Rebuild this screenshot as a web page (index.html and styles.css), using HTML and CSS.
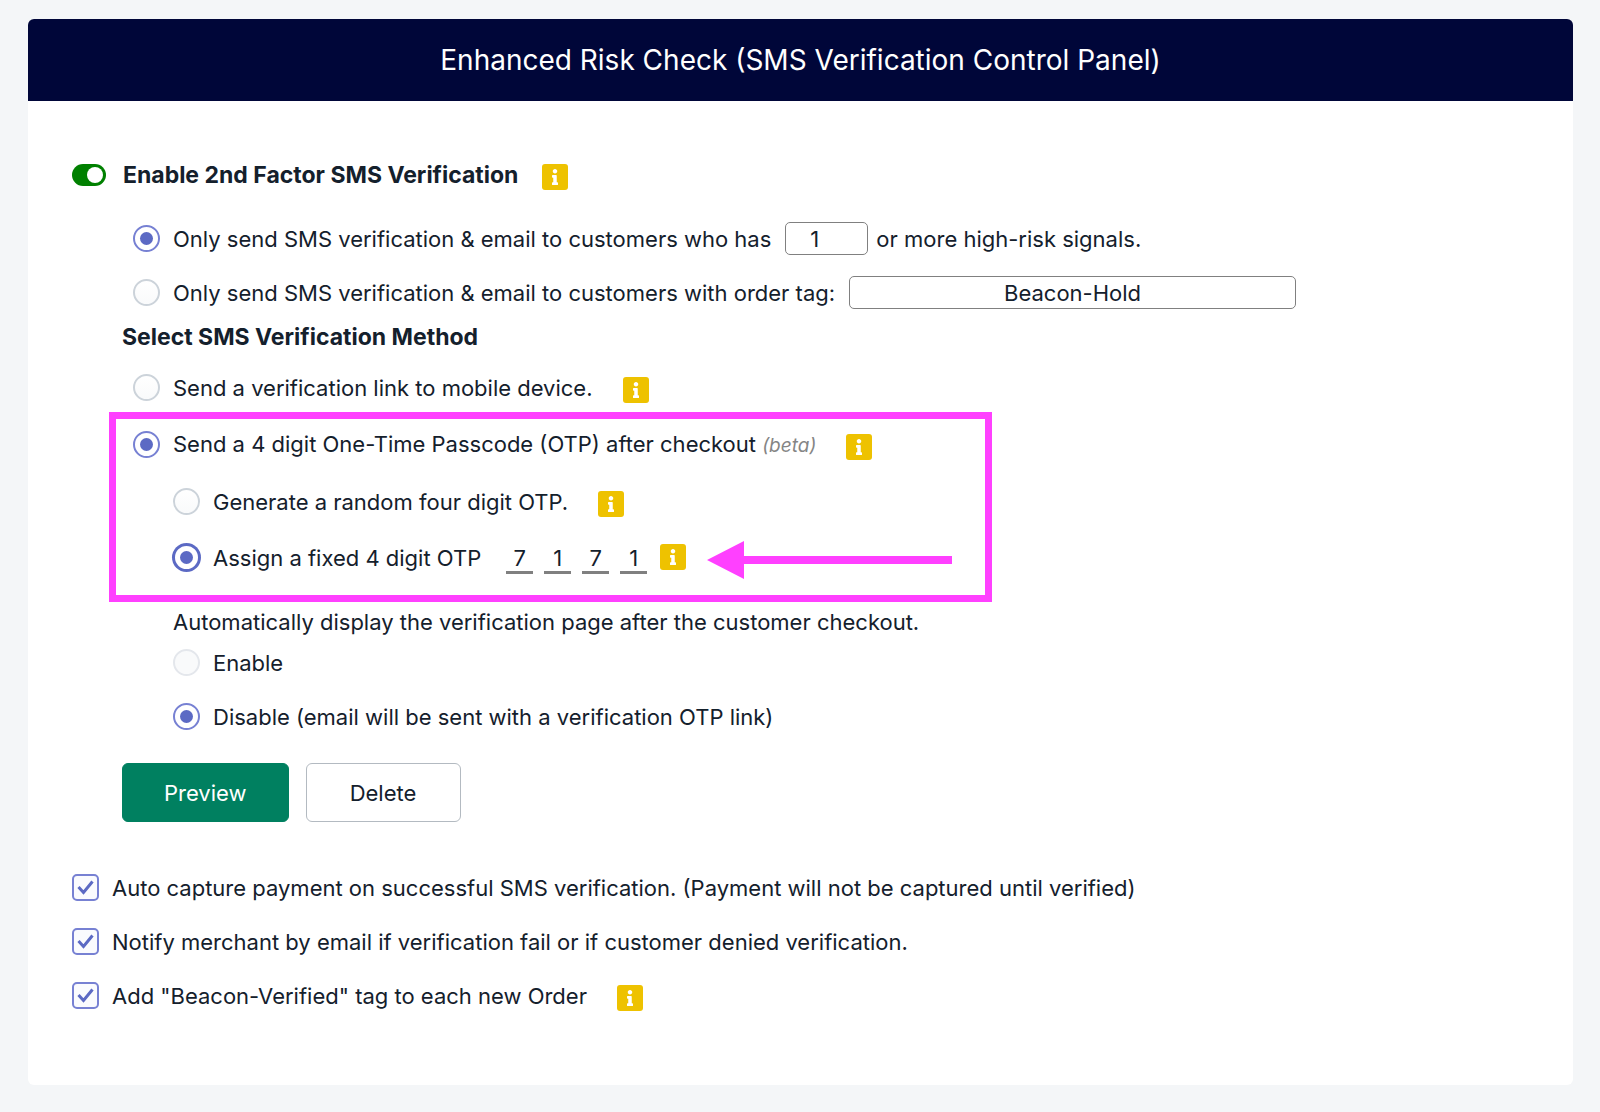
FILE: index.html
```html
<!DOCTYPE html>
<html lang="en">
<head>
<meta charset="utf-8">
<meta name="viewport" content="width=device-width, initial-scale=1">
<title>Enhanced Risk Check</title>
<link rel="stylesheet" href="styles.css">
</head>
<body>
<svg width="0" height="0" class="sprite" aria-hidden="true">
  <symbol id="info" viewBox="0 0 192 512"><path d="M20 424.229h20V279.771H20c-11.046 0-20-8.954-20-20V212c0-11.046 8.954-20 20-20h112c11.046 0 20 8.954 20 20v212.229h20c11.046 0 20 8.954 20 20V492c0 11.046-8.954 20-20 20H20c-11.046 0-20-8.954-20-20v-47.771c0-11.046 8.954-20 20-20zM96 0C56.235 0 24 32.235 24 72s32.235 72 72 72 72-32.235 72-72S135.764 0 96 0z"/></symbol>
</svg>
<main class="card">
  <header class="card-header"><h1>Enhanced Risk Check (SMS Verification Control Panel)</h1></header>
  <form class="card-body">
    <div class="row">
      <input class="toggle" type="checkbox" role="switch" id="enable-sms" checked>
      <label class="strong" for="enable-sms">Enable 2nd Factor SMS Verification</label>
      <button type="button" class="info info-title" aria-label="About SMS verification"><svg><use href="#info"/></svg></button>
    </div>

    <div class="settings">
      <div class="row option">
        <input class="radio" type="radio" name="audience" id="by-signals" checked>
        <label for="by-signals">Only send SMS verification &amp; email to customers who has</label>
        <input class="field count" type="text" inputmode="numeric" value="1" aria-label="Number of high-risk signals">
        <span>or more high-risk signals.</span>
      </div>
      <div class="row option">
        <input class="radio" type="radio" name="audience" id="by-tag">
        <label for="by-tag">Only send SMS verification &amp; email to customers with order tag:</label>
        <input class="field tag" type="text" value="Beacon-Hold" aria-label="Order tag">
      </div>

      <h2 class="strong">Select SMS Verification Method</h2>
      <div class="row option link-option">
        <input class="radio" type="radio" name="method" id="by-link">
        <label for="by-link">Send a verification link to mobile device.</label>
        <button type="button" class="info" aria-label="About verification links"><svg><use href="#info"/></svg></button>
      </div>

      <div class="highlight">
        <div class="row option otp-option">
          <input class="radio" type="radio" name="method" id="by-otp" checked>
          <label for="by-otp">Send a 4 digit One-Time Passcode (OTP) after checkout <em>(beta)</em></label>
          <button type="button" class="info" aria-label="About one-time passcodes"><svg><use href="#info"/></svg></button>
        </div>
        <div class="row option nested">
          <input class="radio" type="radio" name="otp" id="otp-random">
          <label for="otp-random">Generate a random four digit OTP.</label>
          <button type="button" class="info" aria-label="About random passcodes"><svg><use href="#info"/></svg></button>
        </div>
        <div class="row option nested">
          <input class="radio focused" type="radio" name="otp" id="otp-fixed" checked>
          <label for="otp-fixed">Assign a fixed 4 digit OTP</label>
          <div class="digits">
            <input type="text" maxlength="1" value="7" aria-label="Digit 1">
            <input type="text" maxlength="1" value="1" aria-label="Digit 2">
            <input type="text" maxlength="1" value="7" aria-label="Digit 3">
            <input type="text" maxlength="1" value="1" aria-label="Digit 4">
          </div>
          <button type="button" class="info info-digits" aria-label="About fixed passcodes"><svg><use href="#info"/></svg></button>
          <svg class="arrow" viewBox="0 0 245 38" aria-hidden="true"><path d="M0 19 37 0v15h208v8H37v15z"/></svg>
        </div>
      </div>

      <p class="note">Automatically display the verification page after the customer checkout.</p>
      <div class="row option nested">
        <input class="radio" type="radio" name="auto" id="auto-on" disabled>
        <label for="auto-on">Enable</label>
      </div>
      <div class="row option nested">
        <input class="radio" type="radio" name="auto" id="auto-off" checked>
        <label for="auto-off">Disable (email will be sent with a verification OTP link)</label>
      </div>

      <div class="actions">
        <button type="button" class="btn primary">Preview</button>
        <button type="button" class="btn">Delete</button>
      </div>
    </div>

    <div class="row">
      <input class="check" type="checkbox" id="capture" checked>
      <label for="capture">Auto capture payment on successful SMS verification. (Payment will not be captured until verified)</label>
    </div>
    <div class="row">
      <input class="check" type="checkbox" id="notify" checked>
      <label for="notify">Notify merchant by email if verification fail or if customer denied verification.</label>
    </div>
    <div class="row">
      <input class="check" type="checkbox" id="add-tag" checked>
      <label for="add-tag">Add "Beacon-Verified" tag to each new Order</label>
      <button type="button" class="info" aria-label="About the order tag"><svg><use href="#info"/></svg></button>
    </div>
  </form>
</main>
</body>
</html>
```
FILE: styles.css
```css
* { box-sizing: border-box; }

body {
  margin: 0;
  padding: 19px 27px 27px 28px;
  background: #f4f6f8;
  color: #14202c;
  font: 22px/28px Inter, "Liberation Sans", sans-serif;
}

input, button { font: inherit; color: inherit; margin: 0; }
label, span { white-space: nowrap; }
.sprite { position: absolute; }

.card { background: #fff; border-radius: 6px; overflow: hidden; }
.card-header {
  display: flex;
  align-items: center;
  justify-content: center;
  min-height: 82px;
  background: #000639;
  color: #fff;
}
h1 { margin: 0; font-size: 28px; line-height: 36px; font-weight: 400; }
.card-body { padding: 47px 44px 62px; }

.row { display: flex; align-items: center; min-height: 54px; }
.strong { margin: 0; font-size: 23px; line-height: 34px; font-weight: 700; }

.toggle {
  appearance: none;
  display: flex;
  align-items: center;
  justify-content: flex-end;
  width: 34px;
  height: 22px;
  padding: 3px;
  margin-right: 17px;
  border-radius: 11px;
  background: #008000;
}
.toggle::before { content: ""; width: 16px; height: 16px; border-radius: 50%; background: #fff; }

.info {
  display: flex;
  align-items: center;
  justify-content: center;
  flex: none;
  width: 26px;
  height: 26px;
  margin: 4px 0 0 30px;
  padding: 0;
  border: 0;
  border-radius: 3px;
  background: #eec200;
}
.info svg { width: 6px; height: 16px; fill: #fff; }
.info-title { margin-left: 24px; }

.settings { margin: 10px 0 39px 50px; }
.option { padding-left: 11px; }
.nested { padding-left: 51px; }

.radio {
  appearance: none;
  display: grid;
  place-items: center;
  flex: none;
  width: 27px;
  height: 27px;
  margin: 0 13px 2px 0;
  border: 2px solid #ccd3da;
  border-radius: 50%;
  background: linear-gradient(#fff, #f9fafb);
}
.radio:checked { border-color: #7781d3; background: #fff; }
.radio:checked::before { content: ""; width: 13px; height: 13px; border-radius: 50%; background: #5c6ac4; }
.radio:disabled { border-color: #e4e7ec; background: #f9fafb; }
.radio.focused { border-color: #5c6ac4; box-shadow: 0 0 0 1px #5c6ac4; }

.field {
  height: 33px;
  margin: 0 8px 2px 14px;
  padding: 2px 8px 0;
  border: 1px solid #808080;
  border-radius: 5px;
  background: #fff;
  text-align: center;
}
.count { width: 83px; padding-right: 32px; }
.tag { width: 447px; }

.link-option { min-height: 48px; margin-top: 10px; }

.highlight {
  max-width: 883px;
  margin-left: -13px;
  padding: 0 0 9px 6px;
  border: 7px solid #ff40ff;
}
.otp-option { min-height: 52px; margin-bottom: 3px; }
.highlight .nested { min-height: 56px; }
em { color: #858585; font-size: 19px; }

.digits { display: flex; gap: 11px; margin-left: 25px; }
.digits input {
  width: 27px;
  height: 31px;
  padding: 2px 0 0;
  border: 0;
  border-bottom: 3px solid #808080;
  background: none;
  text-align: center;
}
.info-digits { margin: 0 0 2px 13px; }
.arrow { flex: none; width: 245px; height: 38px; margin: 4px 0 0 21px; fill: #ff40ff; }

.note { margin: 6px 0 0 51px; }

.actions { display: flex; gap: 17px; margin-top: 19px; }
.btn {
  min-width: 155px;
  height: 59px;
  padding: 0 41px;
  border: 1px solid #b3bac1;
  border-radius: 6px;
  background: #fff;
}
.primary { border-color: #008060; background: #008060; color: #fff; }

.check {
  appearance: none;
  flex: none;
  width: 27px;
  height: 27px;
  margin: 0 13px 2px 0;
  border: 2px solid #7781d3;
  border-radius: 5px;
  background: #fafbfe url("data:image/svg+xml,%3Csvg xmlns='http://www.w3.org/2000/svg' viewBox='0 0 23 23'%3E%3Cpath d='M4.500 11 9.500 16.500 18.500 5.500' fill='none' stroke='%235c6ac4' stroke-width='3'/%3E%3C/svg%3E") center / 23px no-repeat;
}
```
